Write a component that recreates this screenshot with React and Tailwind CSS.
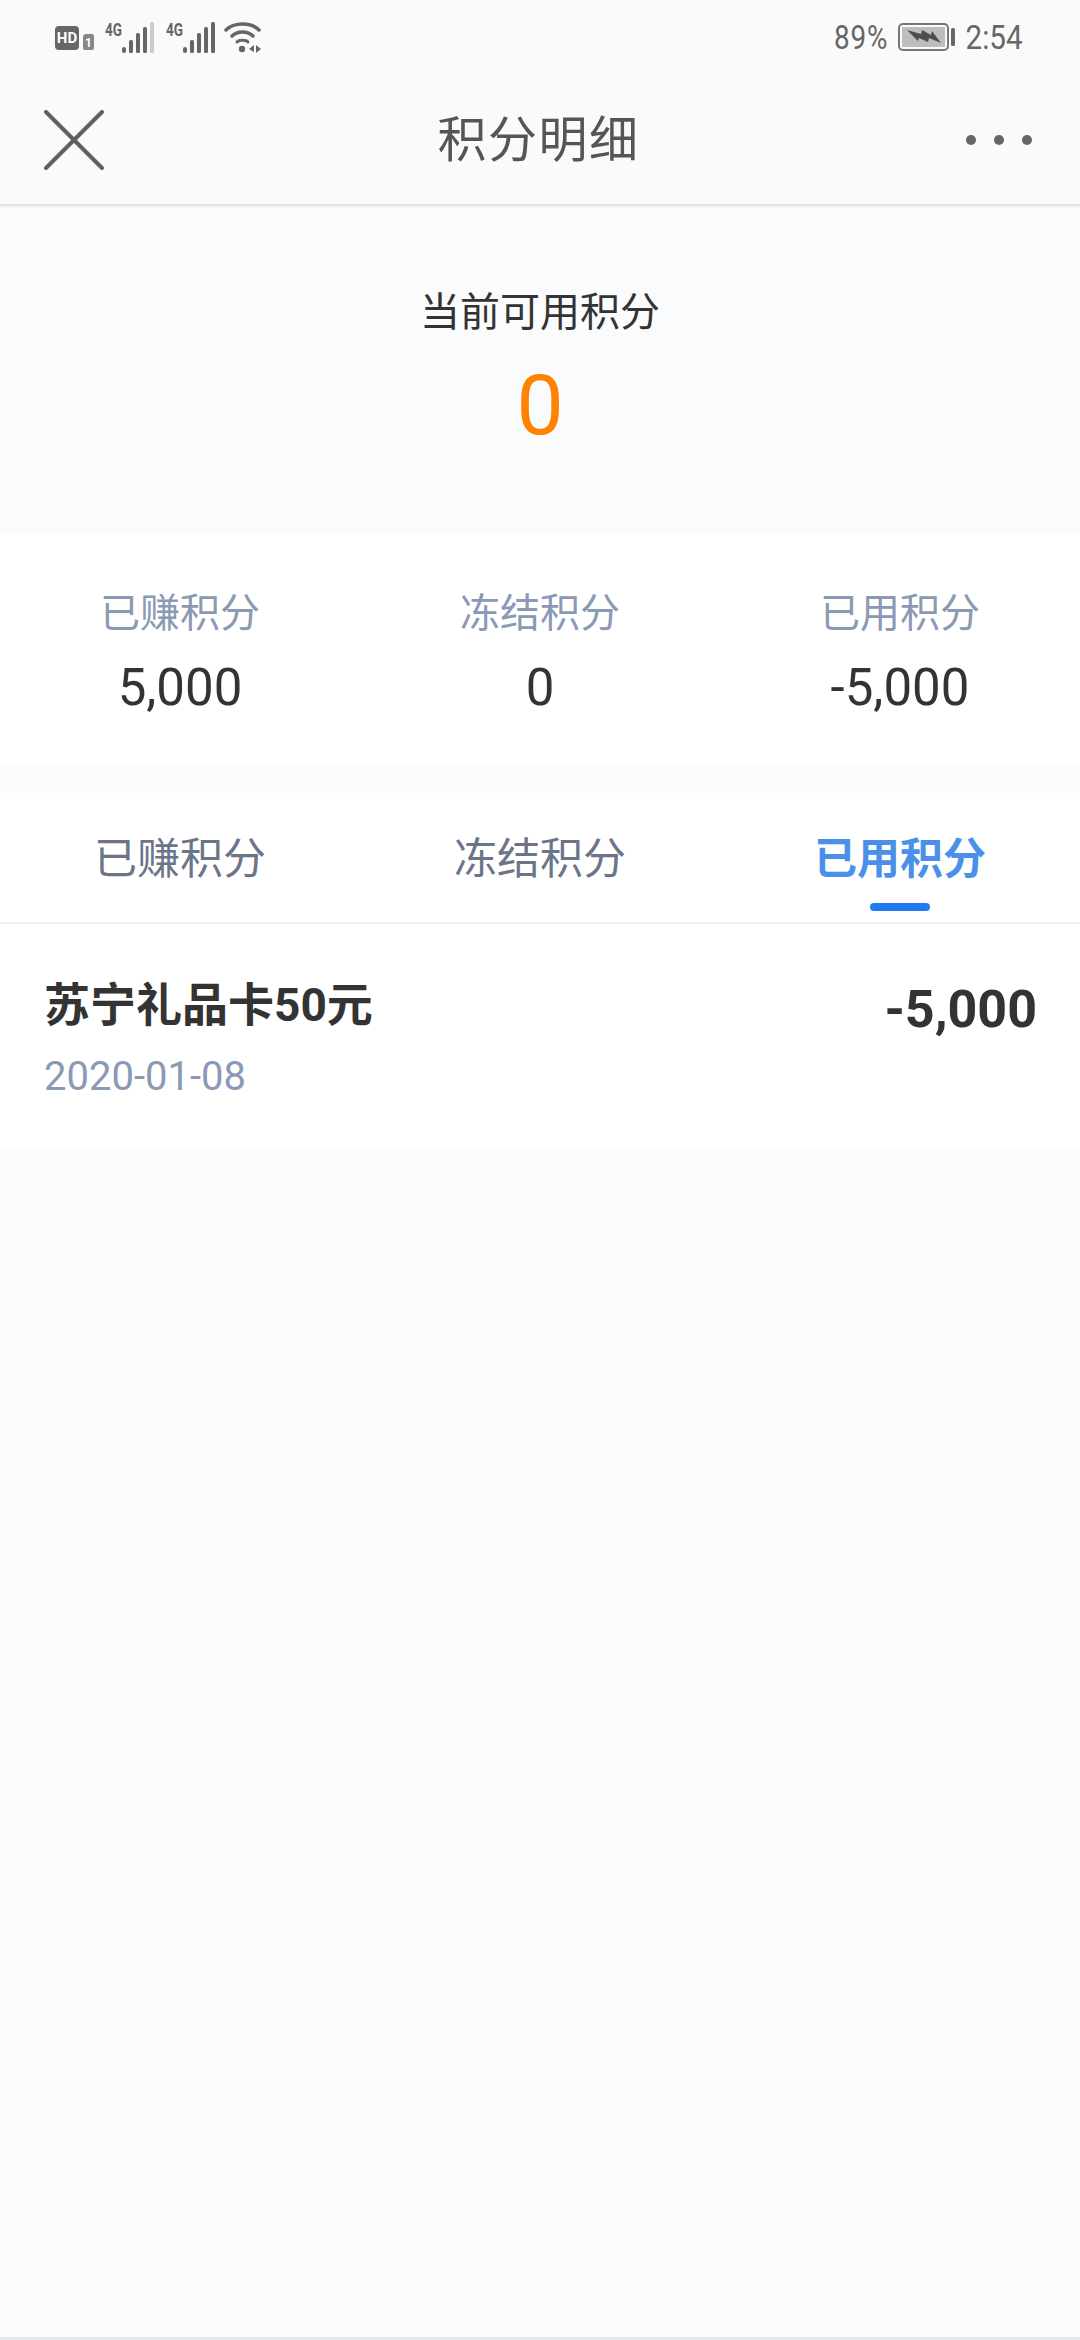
import React from 'react';

const font = "font-['Roboto','Noto_Sans_CJK_SC',sans-serif]";

function SignalIcon({ dim }) {
  return (
    <svg width="49" height="31" viewBox="0 0 49 31" fill="#666" className="overflow-visible">
      <text x="0" y="14" fontSize="19" fontWeight="700" fontFamily="Roboto, sans-serif" textLength="17" lengthAdjust="spacingAndGlyphs">4G</text>
      <rect x="17" y="25" width="4" height="6" rx="2" />
      <rect x="24" y="18" width="4" height="13" rx="1.5" />
      <rect x="31" y="11" width="4" height="20" rx="1.5" />
      <rect x="38" y="5" width="4" height="26" rx="1.5" />
      <rect x="45" y="0" width="4" height="31" rx="1.5" fill={dim ? '#ccc' : '#666'} />
    </svg>
  );
}

function StatusBar() {
  return (
    <div className="h-[72px] flex items-start justify-between pl-[55px] pr-[57px] pt-[22px]">
      <div className="flex items-start">
        <svg width="40" height="31" viewBox="0 0 40 31">
          <rect x="0" y="4" width="24" height="24" rx="4" fill="#666" />
          <text x="12" y="21" fontSize="15" fontWeight="700" fill="#fff" textAnchor="middle" fontFamily="Roboto, sans-serif">HD</text>
          <path d="M30 12 H37 a2 2 0 0 1 2 2 V26 a2 2 0 0 1 -2 2 H30 a2 2 0 0 1 -2 -2 V14 Z" fill="#888" />
          <text x="33.5" y="25" fontSize="12" fontWeight="700" fill="#fff" textAnchor="middle" fontFamily="Roboto, sans-serif">1</text>
        </svg>
        <div className="ml-[10px]"><SignalIcon dim /></div>
        <div className="ml-[12px]"><SignalIcon /></div>
        <svg width="37" height="31" viewBox="0 0 37 31" className="ml-[9px]" fill="none" stroke="#666" strokeWidth="3.5" strokeLinecap="round">
          <path d="M2 8 C 10 0, 27 0, 35 8" />
          <path d="M8 14 C 13 8.5, 24 8.5, 29 14" />
          <path d="M13 20 C 15 17.5, 22 17.5, 24 20" strokeWidth="3" />
          <circle cx="18" cy="27" r="3.2" fill="#666" stroke="none" />
          <path d="M30 23 L25 27 L30 30 Z" fill="#666" stroke="none" />
          <path d="M32 23 L37 27 L32 31 Z" fill="#666" stroke="none" />
        </svg>
      </div>
      <div className="flex items-center text-[#666] text-[34px] leading-[30px]">
        <span className="scale-x-[0.82] origin-right tracking-[1px]">89%</span>
        <svg width="58" height="28" viewBox="0 0 58 28" className="ml-[10px]">
          <rect x="1" y="1" width="49" height="26" rx="4" fill="none" stroke="#777" strokeWidth="2" />
          <rect x="4" y="4" width="43" height="20" fill="#bdbdbd" />
          <path d="M9 7 L23 11 L24 7 L33 12 L34 8 L43 20 L31 15 L30 19 L21 15 L20 18 Z" fill="#4f4f4f" />
          <rect x="53" y="5" width="4" height="18" rx="1.5" fill="#666" />
        </svg>
        <span className="ml-[1px] scale-x-[0.87] origin-right">2:54</span>
      </div>
    </div>
  );
}

function Header() {
  return (
    <div className="h-[134px] flex items-center px-[44px] pt-[4px] bg-[#fafafa] border-b-2 border-[#dfe1e4] shadow-[0_2px_3px_rgba(0,0,0,0.03)]">
      <div className="flex-1">
        <svg width="60" height="60" viewBox="0 0 60 60" stroke="#5f5f5f" strokeWidth="4" strokeLinecap="round">
          <path d="M2 2 L58 58 M58 2 L2 58" />
        </svg>
      </div>
      <span className="text-[49px] leading-none text-[#555] tracking-[1.5px] ml-[1px]">积分明细</span>
      <div className="flex-1 flex justify-end gap-[18px] pr-[4px]">
        <span className="w-[10px] h-[10px] rounded-full bg-[#666]" />
        <span className="w-[10px] h-[10px] rounded-full bg-[#666]" />
        <span className="w-[10px] h-[10px] rounded-full bg-[#666]" />
      </div>
    </div>
  );
}

const stats = [
  { label: '已赚积分', value: '5,000' },
  { label: '冻结积分', value: '0' },
  { label: '已用积分', value: '-5,000' },
];

const tabs = ['已赚积分', '冻结积分', '已用积分'];

export default function App() {
  return (
    <div className={`h-[2340px] w-[1080px] overflow-hidden bg-[#fafbfd] flex flex-col ${font}`}>
      <div className="bg-[#fafafa]">
        <StatusBar />
        <Header />
      </div>

      {/* Current points */}
      <div className="h-[328px] flex flex-col items-center pt-[84px]">
        <p className="text-[40px] leading-[46px] text-[#333]">当前可用积分</p>
        <p className="text-[84px] leading-[84px] text-[#ff8200] mt-[28px]">0</p>
      </div>

      {/* Totals */}
      <div className="h-[232px] bg-white grid grid-cols-3 pt-[57px]">
        {stats.map((s) => (
          <div key={s.label} className="flex flex-col items-center">
            <span className="text-[40px] leading-[46px] text-[#8a99b4]">{s.label}</span>
            <span className="text-[51px] leading-[56px] text-[#333] mt-[23px]">{s.value}</span>
          </div>
        ))}
      </div>

      {/* Tabs */}
      <div className="mt-[27px] h-[131px] bg-white grid grid-cols-3 border-b-2 border-[#eceef0]">
        {tabs.map((t, i) => (
          <div key={i} className="flex flex-col items-center pt-[41px]">
            <span className={i === 2 ? 'text-[43px] leading-[50px] font-bold text-[#4a90e8]' : 'text-[43px] leading-[50px] text-[#6b7488]'}>{t}</span>
            {i === 2 && <span className="mt-[19px] w-[60px] h-[8px] rounded-full bg-[#2079ee]" />}
          </div>
        ))}
      </div>

      {/* Record */}
      <div className="h-[225px] bg-white flex justify-between pl-[44px] pr-[43px] pt-[57px]">
        <div className="flex flex-col">
          <span className="text-[46px] leading-[48px] font-bold text-[#333]">苏宁礼品卡50元</span>
          <span className="text-[40px] leading-[44px] text-[#8a99b4] mt-[26px]">2020-01-08</span>
        </div>
        <span className="text-[52px] leading-[58px] font-bold text-[#333]">-5,000</span>
      </div>

      <div className="flex-1" />
      <div className="h-[3px] bg-[#e6e9ec]" />
    </div>
  );
}
